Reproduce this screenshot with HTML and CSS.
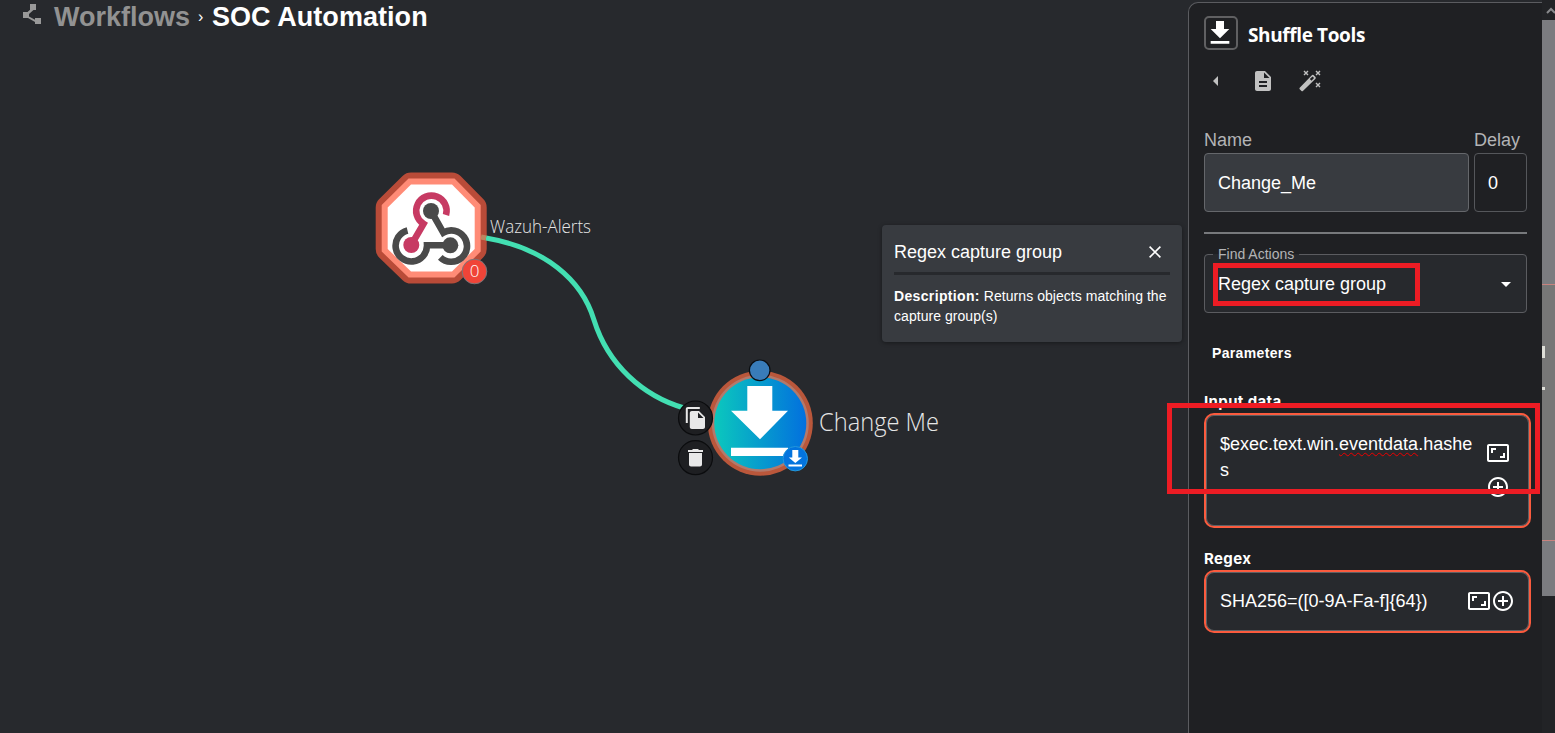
FILE: index.html
```
<!DOCTYPE html>
<html lang="en">
<head>
<meta charset="utf-8">
<title>SOC Automation</title>
<link rel="stylesheet" href="styles.css">
</head>
<body>
<svg class="defs" width="0" height="0" aria-hidden="true">
  <symbol id="download" viewBox="0 0 24 24"><path d="M19 9h-4V3H9v6H5l7 7zM5 18v2h14v-2z"/></symbol>
  <symbol id="expand" viewBox="0 0 24 24"><path d="M19 12h-2v3h-3v2h5zM7 9h3V7H5v5h2zM21 3H3c-1.1 0-2 .9-2 2v14c0 1.100.9 2 2 2h18c1.100 0 2-.9 2-2V5c0-1.100-.9-2-2-2m0 16H3V5h18z"/></symbol>
  <symbol id="add" viewBox="0 0 24 24"><path d="M13 7h-2v4H7v2h4v4h2v-4h4v-2h-4zm-1-5C6.480 2 2 6.480 2 12s4.480 10 10 10 10-4.480 10-10S17.520 2 12 2m0 18c-4.410 0-8-3.590-8-8s3.590-8 8-8 8 3.590 8 8-3.590 8-8 8"/></symbol>
</svg>
<div class="app">
  <main class="workspace">
    <nav class="crumbs">
      <svg class="share" width="20" height="22" viewBox="0 0 20 22"><path d="M7 0h6v6h-2.500L6 10v2.500l6 3.200V14h6v6h-6v-2L5 14H0V8h4.500L8.500 4.500V6H7z"/></svg>
      <span class="parent">Workflows</span>
      <span class="sep">›</span>
      <span class="current">SOC Automation</span>
    </nav>
    <svg class="graph" width="1188" height="733" viewBox="0 0 1188 733">
      <defs>
        <linearGradient id="tool" x1="0" x2="1" y1="0" y2="0"><stop offset="0" stop-color="#0bc8bd"/><stop offset="1" stop-color="#0270de"/></linearGradient>
      </defs>
      <g stroke-linejoin="round">
        <path d="M411 184.500H452L474.700 207.500V249L452 271.500H411L387.700 249V207.500Z" fill="#b94b38" stroke="#b94b38" stroke-width="24"/>
        <path d="M411 184.500H452L474.700 207.500V249L452 271.500H411L387.700 249V207.500Z" fill="#fff" stroke="#ff8b76" stroke-width="12" stroke-linejoin="miter"/>
        <path d="M411 184.500H452L474.700 207.500V249L452 271.500H411L387.700 249V207.500Z" fill="#fff"/>
      </g>
      <g fill="none" stroke-width="6.600">
        <path d="M446 215A15.200 15.200 0 1 0 423.500 223.800L411.500 244.500" stroke="#c73a63"/>
        <path d="M407.500 230.500A15.700 15.700 0 1 0 427 245.300H450" stroke="#4a4a4a"/>
        <path d="M431 211L443.300 232.600A15.700 15.700 0 1 1 440.300 257.300" stroke="#4a4a4a"/>
      </g>
      <circle cx="431" cy="211" r="8" fill="#4a4a4a"/><circle cx="450.300" cy="245.300" r="8" fill="#4a4a4a"/><circle cx="411.300" cy="245" r="8" fill="#c73a63"/>
      <path d="M486 238C545 248 582 280 594 320C608 365 643 396 684 408" fill="none" stroke="#43dfb2" stroke-width="5"/>
      <path d="M481 237L486 238" stroke="#bd8660" stroke-width="5"/>
      <circle cx="474.500" cy="271.500" r="12.300" fill="#f04438" stroke="#77777b"/>
      <text class="count" x="474.500" y="277" text-anchor="middle">0</text>
      <text class="node-label small" x="490" y="233" textLength="101" lengthAdjust="spacingAndGlyphs">Wazuh-Alerts</text>
      <circle cx="760.300" cy="423.200" r="52.500" fill="#ba573b"/>
      <circle cx="760.300" cy="423.200" r="48.500" fill="#b3796b"/>
      <circle cx="760.300" cy="423.200" r="46" fill="url(#tool)"/>
      <path d="M747.300 386H772.300V410.700H788L760 439.300L731 410.700H747.300ZM731 447.700H788V456H731Z" fill="#fff"/>
      <circle cx="759.700" cy="370.300" r="10.300" fill="#397cb9" stroke="#0b0e12" stroke-width="1.200"/>
      <circle cx="795.300" cy="458.700" r="12.200" fill="#0374de" stroke="#2398dc"/>
      <path d="M792.300 450H798.300V457.500H802L795.300 463L788.800 457.500H792.300ZM788.500 464.500H802V466.500H788.500Z" fill="#fff"/>
      <g fill="#1e1f22" stroke="#0b0c0e" stroke-width="1.200"><circle cx="695.500" cy="418" r="17"/><circle cx="695.500" cy="457.700" r="17"/></g>
      <path d="M699.800 407H687.800C686.700 407 685.800 407.900 685.800 409V423H687.800V409H699.800ZM699 411H691.800C690.700 411 689.800 411.900 689.800 413V427C689.800 428.100 690.700 429 691.800 429H703C704.100 429 705 428.100 705 427V417ZM698 418V412.500L703.500 418Z" fill="#e8e8e8"/>
      <path d="M689 464.500C689 465.600 689.900 466.500 691 466.500H700C701.100 466.500 702 465.600 702 464.500V453H689ZM703 450H699L698 449H693L692 450H688V452H703Z" fill="#e8e8e8"/>
      <text class="node-label large" x="819" y="431" textLength="120" lengthAdjust="spacingAndGlyphs">Change Me</text>
    </svg>
    <aside class="tooltip">
      <header><h2>Regex capture group</h2><svg width="12" height="12" viewBox="0 0 12 12"><path d="M.6.600l10.800 10.800M11.400.600L.6 11.400"/></svg></header>
      <p><b>Description:</b> Returns objects matching the capture group(s)</p>
    </aside>
  </main>
  <section class="panel">
    <header class="tool-head">
      <span class="tool-icon"><svg width="32" height="32"><use href="#download"/></svg></span>
      <h1>Shuffle Tools</h1>
    </header>
    <div class="toolbar">
      <svg class="back" width="24" height="24" viewBox="0 0 24 24"><path d="M14 7v10l-5-5z"/></svg>
      <svg width="24" height="24" viewBox="0 0 24 24"><path d="M14 2H6c-1.100 0-2 .9-2 2v16c0 1.100.9 2 2 2h12c1.100 0 2-.9 2-2V8zm2 16H8v-2h8zm0-4H8v-2h8zm-3-5V3.500L18.500 9z"/></svg>
      <svg width="24" height="24" viewBox="0 0 24 24"><g transform="translate(1 1.500)"><path d="M16.500 6.500L14.500 4.500q-.7-.5-1.400 0L.7 17.300a1 1 0 0 0 0 1.400l1.800 1.800a1 1 0 0 0 1.400 0L16.500 8.200q.6-.8 0-1.700M12.500 10.200L10.800 8.500l2.700-2.500 1.600 1.600z"/><path class="sparks" d="M5 .5l4 4M9 .5l-4 4M17 .5l4 4M21 .5l-4 4M17 12.500l4 4M21 12.500l-4 4"/></g></svg>
    </div>
    <div class="basics">
      <label>Name<span class="field filled">Change_Me</span></label>
      <label>Delay<span class="field">0</span></label>
    </div>
    <fieldset class="action">
      <legend>Find Actions</legend>
      <div class="choice"><span>Regex capture group</span><svg width="10" height="5" viewBox="0 0 10 5"><path d="M0 0h10L5 5z"/></svg></div>
    </fieldset>
    <h3 class="parameters">Parameters</h3>
    <h4 class="param-name">Input data</h4>
    <div class="param tall">
      <span class="value">$exec.text.win.<span class="misspelt">eventdata</span>.hashes</span>
      <span class="tools"><svg width="24" height="24"><use href="#expand"/></svg><svg width="24" height="24"><use href="#add"/></svg></span>
    </div>
    <h4 class="param-name regex">Regex</h4>
    <div class="param">
      <span class="value">SHA256=([0-9A-Fa-f]{64})</span>
      <span class="tools"><svg width="24" height="24"><use href="#expand"/></svg><svg width="24" height="24"><use href="#add"/></svg></span>
    </div>
  </section>
  <div class="scrollbar">
    <svg width="13" height="20" viewBox="0 0 13 20"><path d="M5 13l4-4 4 4"/></svg>
    <div class="thumb"><div class="marked"><i></i><i></i></div></div>
  </div>
</div>
<div class="highlight action-mark"></div>
<div class="highlight input-mark"></div>
</body>
</html>
```
FILE: styles.css
```
* { box-sizing: border-box; }
body { margin: 0; background: #27292d; color: #fff; font-family: "Liberation Sans", Arial, sans-serif; overflow: hidden; }
h1, h2, h3, h4, p { margin: 0; }
svg { display: block; flex: none; }
.defs { position: absolute; }
.app { display: flex; width: 1555px; height: 733px; }

.workspace { position: relative; flex: 1; }
.crumbs { display: flex; align-items: center; height: 34px; padding-left: 23px; font-size: 27px; font-weight: bold; line-height: 34px; white-space: nowrap; }
.share { fill: #999; margin-top: -4px; }
.parent { color: #929292; margin-left: 11px; width: 136px; }
.sep { width: 22px; padding-left: 8px; font-size: 16px; font-weight: normal; }
.current { letter-spacing: .05px; }
.graph { position: absolute; inset: 0; }
.node-label { font-family: "Open Sans", "Noto Sans", sans-serif; font-weight: 300; fill: #e6e6e6; }
.small { font-size: 18px; }
.large { font-size: 25px; }
.count { font: 300 17px "Open Sans", sans-serif; fill: #fff; }

.tooltip { position: absolute; left: 882px; top: 225px; width: 300px; height: 117px; padding: 12px 10px 12px 12px; border-radius: 4px; background: #383b40; box-shadow: 0 1px 4px #0006; }
.tooltip header { display: flex; align-items: center; justify-content: space-between; width: 276px; height: 38px; padding: 0 9px 6px 0; border-bottom: 3px solid #27292d; }
.tooltip h2 { font-size: 18px; font-weight: normal; line-height: 30px; }
.tooltip header svg { stroke: #fff; stroke-width: 1.6; fill: none; }
.tooltip p { margin-top: 11px; font-size: 14px; line-height: 20px; letter-spacing: .05px; }
.tooltip b { letter-spacing: .35px; }

.panel { width: 354px; height: 732px; margin-top: 2px; padding: 13px 11px 0 15px; background: #1f2023; border: solid #5b5c60; border-width: 1px 0 0 1px; border-radius: 10px 0 0; }
.tool-head { display: flex; align-items: center; gap: 10px; height: 34px; }
.tool-icon { display: grid; place-items: center; width: 34px; height: 34px; border: 2px solid #606062; border-radius: 5px; }
.tool-icon svg { fill: #fff; margin: -1px 0 0 -2px; }
h1 { padding-top: 3px; font: 700 19px "Open Sans", sans-serif; letter-spacing: -.38px; }
.toolbar { display: flex; gap: 23px; height: 24px; margin-top: 19px; fill: #c1c1c1; }
.sparks { fill: none; stroke: #c1c1c1; stroke-width: 1.4; }
.basics { display: grid; grid-template-columns: 265px 53px; gap: 5px; width: 323px; height: 141px; padding-top: 35px; border-bottom: 2px solid #77797c; }
.basics label { color: #b3b4b6; font-size: 18px; line-height: 24px; }
.field { display: flex; align-items: center; height: 59px; margin-top: 1px; padding-left: 13px; border: 1px solid #55575b; border-radius: 4px; color: #fff; }
.filled { background: #383b40; border-color: #65676b; }
.action { width: 323px; height: 68px; margin: 11px 0 0; padding: 0; border: 1px solid #5b5c60; border-radius: 4px; background: #27292d; min-width: 0; }
.action legend { margin-left: 8px; padding: 0 5px; font-size: 14px; line-height: 18px; color: #b3b4b6; }
.choice { display: flex; align-items: center; justify-content: space-between; height: 42px; padding: 0 15px 0 13px; font-size: 18px; }
.choice svg { fill: #fff; }
.parameters { margin: 31px 0 0 8px; font-size: 14px; line-height: 18px; letter-spacing: .35px; }
.param-name { margin-top: 30px; height: 20px; font: 700 15px/20px Inter, sans-serif; letter-spacing: .38px; }
.param { display: flex; align-items: center; width: 327px; height: 63px; margin-top: 1px; padding: 0 14px 1px; border: 2px solid #fb5b3e; border-radius: 10px; box-shadow: inset 0 0 0 1px #5d6064; background: #27292d; font-size: 18px; }
.param .value { flex: 1; }
.param .tools { display: flex; }
.tall { height: 115px; align-items: flex-start; padding-top: 16px; line-height: 26px; }
.tall .value { flex: none; width: 255px; word-break: break-all; }
.tall .tools { flex-direction: column; gap: 10px; margin: 10px 0 0 11px; }
.param svg { fill: #fff; }
.misspelt { text-decoration: underline wavy #f00000 1.3px; text-underline-offset: 2px; text-decoration-skip-ink: none; }
.regex { margin-top: 21px; }

.scrollbar { width: 13px; background: #222326; }
.scrollbar svg { fill: none; stroke: #88898c; stroke-width: 2; }
.thumb { height: 576px; padding-top: 264px; background: #7b7c80; }
.marked { height: 257px; padding-top: 61px; background: #777; border: solid #c8827e; border-width: 1px 0; }
.marked i { display: block; width: 3px; height: 12px; background: #deded8; }
.marked i + i { height: 3px; margin-top: 29px; }

.highlight { position: absolute; border: 5px solid #ed1c24; }
.action-mark { left: 1213px; top: 263px; width: 207px; height: 43px; }
.input-mark { left: 1167px; top: 403px; width: 373px; height: 91px; }
```
